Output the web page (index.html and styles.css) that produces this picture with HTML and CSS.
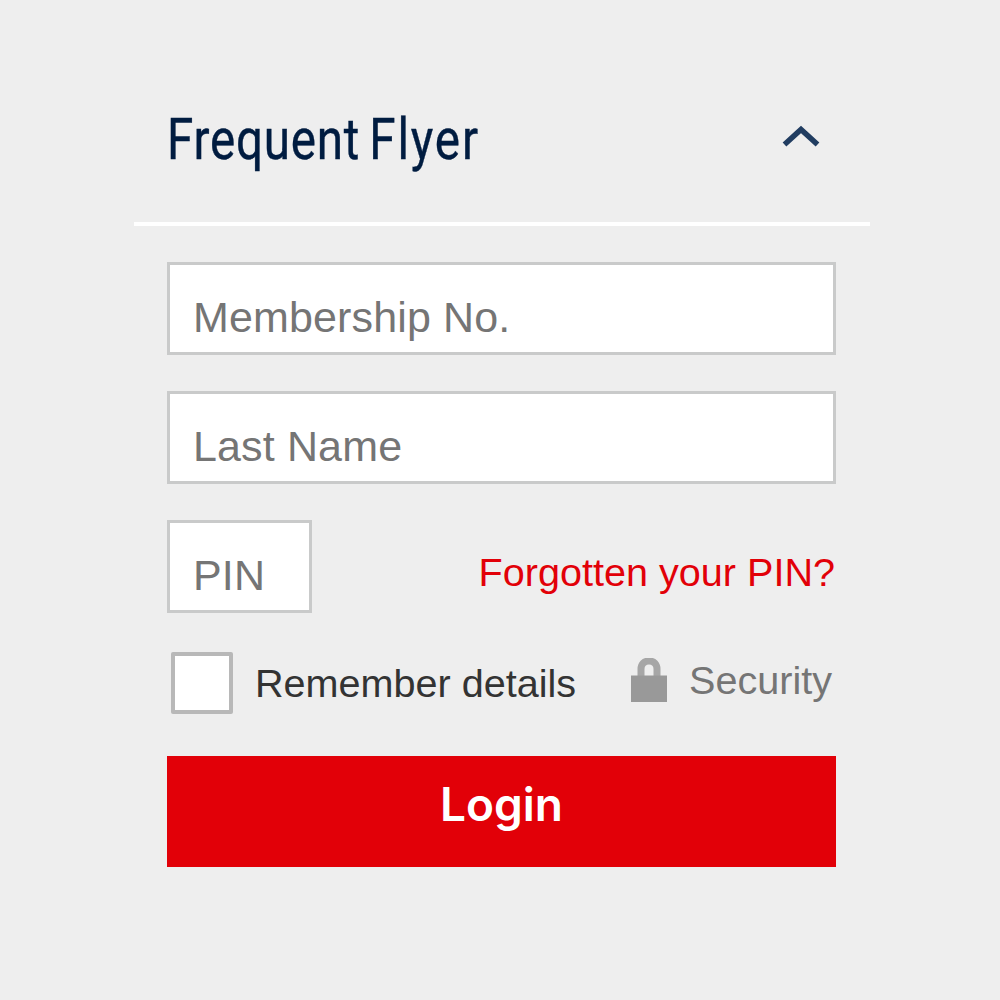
FILE: index.html
```html
<!DOCTYPE html>
<html lang="en">
<head>
<meta charset="utf-8">
<title>Frequent Flyer</title>
<link rel="stylesheet" href="styles.css">
</head>
<body>
<main class="panel">
  <header class="panel-header">
    <h1 class="title">Frequent <span class="title-end">Flyer</span></h1>
    <svg class="chevron" width="40" height="24" viewBox="0 0 40 24"><path d="M3.500 20.500L20 5.500L36.500 20.500" fill="none" stroke="#213d61" stroke-width="5.500"/></svg>
  </header>
  <form class="form">
    <div class="field">Membership No.</div>
    <div class="field">Last Name</div>
    <div class="row pin-row">
      <div class="field pin">PIN</div>
      <a class="forgot">Forgotten your PIN?</a>
    </div>
    <div class="row options">
      <span class="checkbox"></span>
      <span class="remember">Remember details</span>
      <svg class="lock" width="36" height="45" viewBox="0 0 36 45"><path d="M10 20V11C10 6 13 3 18 3S26 6 26 11V20" fill="none" stroke="#a6a6a6" stroke-width="7"/><path d="M0 17.500H36V44H0Z" fill="#999"/></svg>
      <span class="security">Security</span>
    </div>
    <button class="login" type="button">Login</button>
  </form>
</main>
</body>
</html>
```
FILE: styles.css
```css
* { box-sizing: border-box; }
body {
  margin: 0;
  height: 1000px;
  background: #eee;
  font-family: "Liberation Sans", Arial, sans-serif;
  overflow: hidden;
}
.panel { width: 736px; margin-left: 134px; padding-top: 100px; }
.panel-header {
  display: flex;
  justify-content: space-between;
  height: 125.500px;
  padding: 0 49px 0 33px;
  border-bottom: 4px solid #fff;
}
.title {
  width: 314px;
  margin: 6px 0 0;
  font: 400 57px/68px Roboto, sans-serif;
  letter-spacing: .9px;
  word-spacing: -4px;
  color: #001c40;
  -webkit-text-stroke: .4px #001c40;
  white-space: nowrap;
  transform: scaleX(.835);
  transform-origin: left;
}
.title-end { letter-spacing: 2.200px; }
.chevron { margin-top: 24px; }
.form { padding: 36.500px 34px 0 33px; }
.field {
  height: 92.500px;
  margin-bottom: 36.500px;
  padding: 27px 0 0 23px;
  background: #fff;
  border: 3px solid #c9caca;
  color: #757575;
  font-size: 43px;
  letter-spacing: .14px;
  line-height: 50px;
  white-space: nowrap;
}
.row { display: flex; white-space: nowrap; }
.pin-row { justify-content: space-between; height: 93px; }
.pin { width: 145px; margin: 0; }
.forgot {
  margin: 28px 1px 0 0;
  color: #e20008;
  font-size: 39.600px;
  line-height: 48px;
}
.options { margin-top: 39px; padding-left: 4px; height: 104px; font-size: 39.600px; line-height: 48px; }
.checkbox { width: 62px; height: 62px; background: #fff; border: 4px solid #b8b8b8; border-radius: 2px; }
.remember { flex: 0 0 376px; margin: 7px 0 0 22px; color: #333; }
.lock { flex: none; margin: 6px 22px 0 0; }
.security { margin-top: 4px; color: #757575; }
.login {
  display: block;
  width: 669px;
  height: 111px;
  padding: 0 0 15px;
  border: 0;
  background: #e20008;
  color: #fff;
  font: 600 46px/56px Inter, sans-serif;
}
```
